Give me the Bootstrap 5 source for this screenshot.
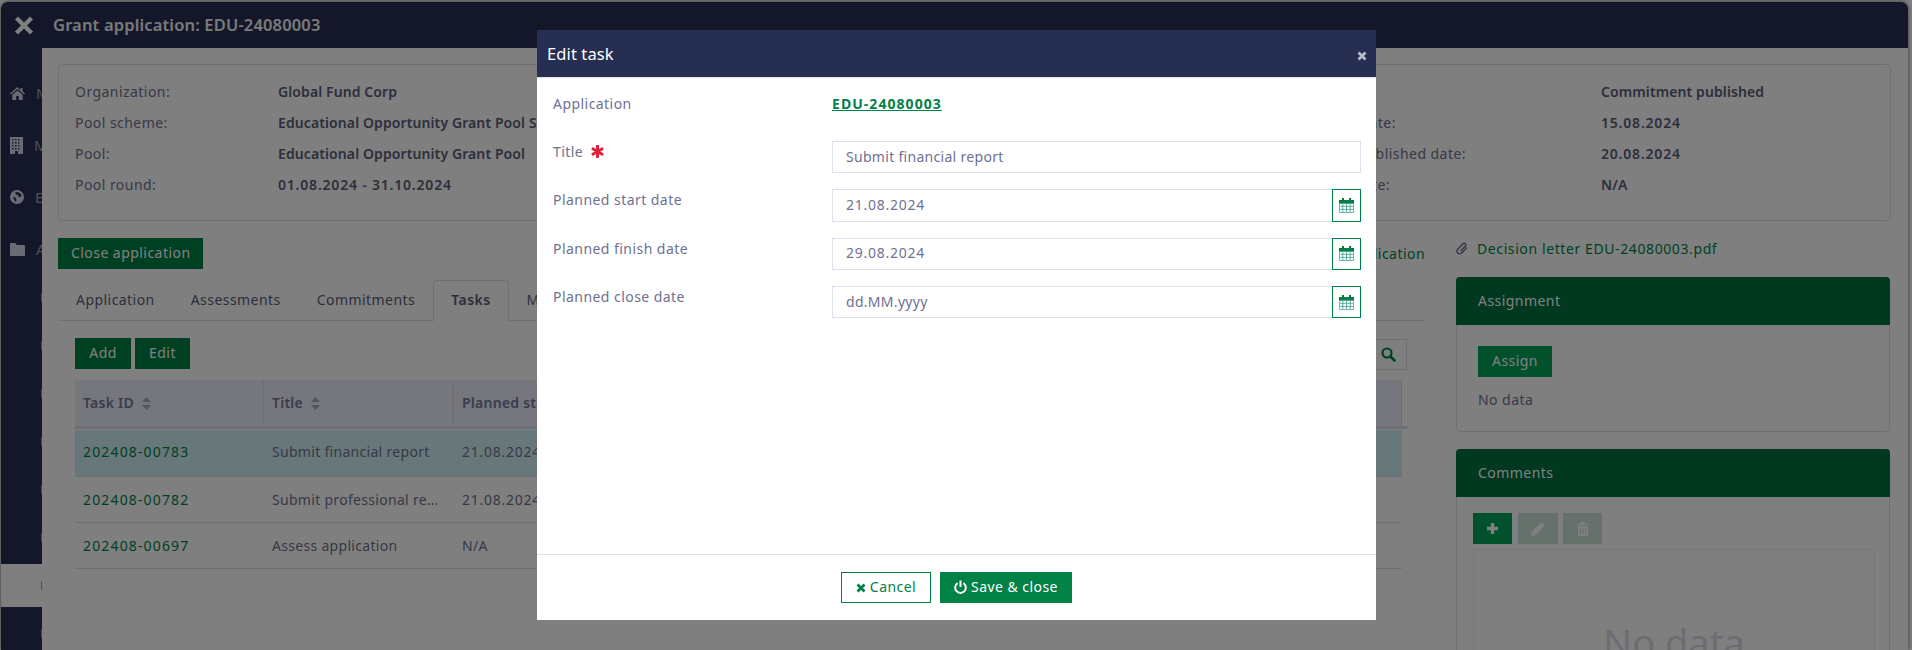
<!DOCTYPE html>
<html lang="en">
<head>
<meta charset="utf-8">
<title>Edit task</title>
<link href="https://cdn.jsdelivr.net/npm/bootstrap@5.3.0/dist/css/bootstrap.min.css" rel="stylesheet">
<style>
html,body{height:650px;overflow:hidden}
body{background:#fff;font-family:"Noto Sans","Open Sans",sans-serif;font-size:14px;letter-spacing:.45px;color:#6e7191}
.app-window{margin:2px 4px 0 1px;height:648px;background:#262e52;border-radius:7px 7px 0 0;overflow:hidden;box-shadow:0 0 4px rgba(0,0,0,.6)}
.app-top{height:46px;color:#fff}
.app-top svg{margin-left:13px;margin-right:19px}
.app-title{font-size:16.5px;font-weight:600;letter-spacing:.15px;color:#fff;opacity:.95}
.side{width:41px;flex:none;overflow:hidden;padding-top:19px;height:602px}
.side-main{height:52px;width:80px;padding-left:9px;color:#9a9db0}
.side-main svg{margin-right:11px;flex:none}
.side-main span{font-size:15px}
.side-sub{height:48px}
.side-sub i{display:block;width:1px;height:9px;margin-left:40px;background:#3ea0e0}
.side-sub.now{background:#fff;height:43px;margin:3px 0 2px}
.side-sub.now i{background:#f0902a}
.side-first{margin-top:-2px}
.main-pane{background:#fff;padding:16px 17px 0 16px;height:602px;overflow:hidden;min-width:0}
.info-box{display:grid;grid-template-columns:203px 984px 339px 1fr;padding:11px 16px 0;height:157px;border:1px solid #dfe0ee;border-radius:4px;grid-auto-rows:31px;align-items:center;white-space:nowrap}
.info-box b{font-weight:600;color:#5a5d78;letter-spacing:.1px}
.info-box b.nums{letter-spacing:.8px}
.nums{letter-spacing:.75px}
.cols{gap:31px;margin-top:17px}
.col-l{width:1367px;flex:none}
.col-r{width:434px;flex:none}
.green-btn{background:#008145;border:0;color:#fff;height:31px;border-radius:0;font-size:14px;padding:0 13px 2px;letter-spacing:.45px}
.green-btn:hover{background:#008145;color:#fff}
.lnk{color:#008145;text-decoration:none}
.tabs-row{margin-top:11px;height:41px;border-color:#dfe0ee;flex-wrap:nowrap}
.tabs-row .nav-link{height:41px;padding:0 17px;line-height:37px;color:#5a5d78;border-radius:4px 4px 0 0;white-space:nowrap;background:none;border:1px solid transparent}
.tabs-row .nav-link.active{border-color:#dfe0ee #dfe0ee #fff;font-weight:600;color:#5a5d78}
.tab-body{padding:17px 18px 0 17px}
.find-box{width:210px;height:31px;border:1px solid #dfe0ee;margin-top:1px;padding-right:10px}
.task-table{table-layout:fixed;width:1333px;margin:10px 0 0;color:#6e7191;border-collapse:separate;border-spacing:0;letter-spacing:.3px}
.task-table th{height:49px;background:#eceef8;font-weight:600;padding:0 8px 2px;border:0;border-bottom:3px solid #dfe0ee;border-right:1px solid #d8d9e8;vertical-align:middle;color:#74779a;white-space:nowrap;box-shadow:none;letter-spacing:.25px}
.task-table th.tail,.task-table td.tail{background:transparent;border-right:0;padding:0}
.task-table td.tail{border-bottom:0}
.task-table td{height:46px;padding:0 8px;border:0;border-bottom:1px solid #dfe0ee;vertical-align:middle;white-space:nowrap;overflow:hidden;text-overflow:ellipsis;background:transparent;box-shadow:none;color:#6e7191}
.task-table tr.sel td:not(.tail){background:#d0f0f4;height:48px;padding-bottom:3px}
.task-table tr.sel td{border-top:1px solid #fff}
.task-table .lnk{color:#008145;letter-spacing:1.15px}
.sort-i{margin-left:4px;vertical-align:-2px}
.doc-line{height:22px;margin-bottom:17px;letter-spacing:.6px;padding-bottom:2px}
.doc-line svg{margin-right:9px}
.side-card{border:1px solid #dfe0ee;border-radius:4px;margin-bottom:17px}
.side-head{height:48px;background:#00733f;color:#fff;padding-left:22px;margin:-1px -1px 0;line-height:47px;border-radius:4px 4px 0 0}
.side-body{padding:21px 21px 0;height:106px}
.btn-bright{background:#00a259;padding:0 14px 2px}
.btn-bright:hover{background:#00a259}
.tool-row{padding:16px 0 0 16px;gap:6px}
.tool-btn{width:39px;height:31px;padding:0;display:flex;align-items:center;justify-content:center}
.tool-btn.off{border-radius:0;width:40px}
.tool-btn.off.trash-btn{width:39px;margin-left:-1px}
.tool-btn.off:disabled{background:#cfe3d8;color:#fff;border:0;opacity:1}
.tool-row+.nada{margin:5px 14px 0 16px;height:200px;border:1px solid #f0f1f6;text-align:center;font-size:38px;color:#d9dbe6;padding-top:64px;letter-spacing:0}
.edit-dlg{max-width:839px;margin:30px 0 0 537px}
.edit-dlg .modal-content{height:590px;border:0;border-radius:0;background:#fff}
.edit-head{height:48px;background:#262e52;color:#fff;padding:0 9px 0 10px;border-bottom:1px solid #dfe0ee;border-radius:0}
.edit-head h5{font-size:16.5px;font-weight:400;letter-spacing:.1px}
.edit-x{background:none;border:0;padding:0;margin-top:5px;color:#b9bcc9;line-height:0}
.edit-form{padding:14.67px 15px 0 16px}
.edit-row{height:32.33px;margin-bottom:16px}
.edit-row label{width:279px;flex:none;line-height:21px;color:#6e7191}
.req{margin-left:8px;vertical-align:-1px;margin-top:-6px}
.edit-field{flex:1;min-width:0}
.edit-link{color:#008145;font-weight:700;line-height:21px;letter-spacing:1.05px}
.edit-input{height:32.33px;border-radius:0;border:1px solid #dfe0ee;padding:0 13px 2px;font-size:14px;color:#6e7191;letter-spacing:.3px}
.edit-input.dated{letter-spacing:.75px}
.edit-input::placeholder{color:#6e7191;opacity:1}
.cal-btn{width:29px;height:32.33px;padding:0;border:1px solid #008145;border-radius:0;background:#fff;margin-left:-1px;display:flex;align-items:center;justify-content:center;z-index:3}
.input-group>.edit-input{border-radius:0}
.edit-foot{height:66px;flex:none;border-top:1px solid #dfe0ee;border-radius:0;padding:17px 0 0;justify-content:center;align-items:flex-start;gap:9px;display:flex;margin-top:auto}
.edit-foot>*{margin:0}
.btn-ghost{background:#fff;border:1px solid #008145;color:#008145;height:31px;width:90px;border-radius:0;padding:0 0 2px;font-size:14px;letter-spacing:.45px}
.btn-ghost:hover{background:#fff;color:#008145;border-color:#008145}
.btn-save{width:132px;padding:0 0 2px}
</style>
</head>
<body>
<div class="app-window">
  <div class="app-top d-flex align-items-center">
    <svg width="20" height="19" viewBox="0 0 20 19"><path d="M2.5 2 17.5 17M17.5 2 2.5 17" stroke="#fff" stroke-width="4.4" fill="none"/></svg>
    <span class="app-title">Grant application: EDU-24080003</span>
  </div>
  <div class="d-flex">
    <div class="side">
      <div class="side-main d-flex align-items-center">
        <svg width="15" height="13" viewBox="0 0 15 13"><path fill="#d5d8ea" d="M7.5 0 0 6.4l.9 1L7.5 1.900l6.600 5.500.9-1-2.500-2.100V1h-2v2.600zM2.300 7.700V13h3.900V9h2.600v4h3.900V7.700L7.500 3.400z"/></svg>
        <span>My</span>
      </div>
      <div class="side-main d-flex align-items-center">
        <svg width="13" height="17" viewBox="0 0 13 17"><path fill="#d5d8ea" fill-rule="evenodd" d="M0 0h13v17H0zM2 2v1.500h1.500V2zm3 0v1.500h1.500V2zm3 0v1.500h1.500V2zM2 5v1.500h1.500V5zm3 0v1.500h1.500V5zm3 0v1.500h1.500V5zM2 8v1.500h1.500V8zm3 0v1.500h1.500V8zm3 0v1.500h1.500V8zM2 11v1.500h1.500V11zm3 0v1.500h1.500V11zm3 0v1.500h1.500V11zM5 14v3h3v-3z"/></svg>
        <span>My</span>
      </div>
      <div class="side-main d-flex align-items-center">
        <svg width="14" height="14" viewBox="0 0 14 14"><path fill="#d5d8ea" fill-rule="evenodd" d="M7 0a7 7 0 1 0 0 14A7 7 0 0 0 7 0zM5 2.500 7.500 2l2 1 2 1.500-.5 2-2 1-1-2.500-2-.5zM3 7l2.500.5 1 2-.5 2.500-1.500-1.500z"/></svg>
        <span>E</span>
      </div>
      <div class="side-main d-flex align-items-center">
        <svg width="15" height="13" viewBox="0 0 15 13"><path fill="#d5d8ea" d="M1 0h4.500l1.200 2H14a1 1 0 0 1 1 1v9a1 1 0 0 1-1 1H1a1 1 0 0 1-1-1V1a1 1 0 0 1 1-1z"/></svg>
        <span>A</span>
      </div>
      <div class="side-sub side-first d-flex align-items-center"><i></i></div>
      <div class="side-sub d-flex align-items-center"><i></i></div>
      <div class="side-sub d-flex align-items-center"><i></i></div>
      <div class="side-sub d-flex align-items-center"><i></i></div>
      <div class="side-sub d-flex align-items-center"><i></i></div>
      <div class="side-sub d-flex align-items-center"><i></i></div>
      <div class="side-sub now d-flex align-items-center"><i></i></div>
      <div class="side-sub d-flex align-items-center"><i></i></div>
    </div>
    <div class="main-pane flex-grow-1">
      <div class="info-box">
        <span>Organization:</span><b>Global Fund Corp</b><span>Status:</span><b>Commitment published</b>
        <span>Pool scheme:</span><b>Educational Opportunity Grant Pool Scheme</b><span>Assessed end date:</span><b class="nums">15.08.2024</b>
        <span>Pool:</span><b>Educational Opportunity Grant Pool</b><span>Commitment published date:</span><b class="nums">20.08.2024</b>
        <span>Pool round:</span><b class="nums">01.08.2024 - 31.10.2024</b><span>Formal close date:</span><b>N/A</b>
      </div>
      <div class="cols d-flex">
        <div class="col-l">
          <div class="d-flex justify-content-between align-items-center">
            <button class="btn green-btn" type="button">Close application</button>
            <a class="lnk" href="#">Print application</a>
          </div>
          <ul class="nav nav-tabs tabs-row">
            <li class="nav-item"><a class="nav-link" href="#">Application</a></li>
            <li class="nav-item"><a class="nav-link" href="#">Assessments</a></li>
            <li class="nav-item"><a class="nav-link" href="#">Commitments</a></li>
            <li class="nav-item"><a class="nav-link active" href="#">Tasks</a></li>
            <li class="nav-item"><a class="nav-link" href="#">Messages</a></li>
          </ul>
          <div class="tab-body">
            <div class="d-flex justify-content-between align-items-start">
              <div class="d-flex gap-1">
                <button class="btn green-btn" type="button" style="width:56px">Add</button>
                <button class="btn green-btn" type="button" style="width:55px">Edit</button>
              </div>
              <div class="find-box d-flex align-items-center justify-content-end">
                <svg width="15" height="15" viewBox="0 0 15 15"><circle cx="6" cy="6" r="4.500" stroke="#008145" stroke-width="2.200" fill="none"/><path d="m9.500 9.500 4 4" stroke="#008145" stroke-width="2.600" stroke-linecap="round"/></svg>
              </div>
            </div>
            <table class="table task-table">
              <colgroup><col style="width:189px"><col style="width:190px"><col><col style="width:200px"><col style="width:200px"><col style="width:6px"></colgroup>
              <thead>
                <tr>
                  <th>Task ID <svg class="sort-i" width="9" height="13" viewBox="0 0 9 13"><path fill="#a6a8be" d="M4.500 0 9 5H0zM4.500 13 0 8h9z"/></svg></th>
                  <th>Title <svg class="sort-i" width="9" height="13" viewBox="0 0 9 13"><path fill="#a6a8be" d="M4.500 0 9 5H0zM4.500 13 0 8h9z"/></svg></th>
                  <th>Planned start date</th><th>Planned finish date</th><th>Planned close date</th><th class="tail"></th>
                </tr>
              </thead>
              <tbody>
                <tr class="sel"><td><a class="lnk" href="#">202408-00783</a></td><td>Submit financial report</td><td class="nums">21.08.2024</td><td class="nums">29.08.2024</td><td>N/A</td><td class="tail"></td></tr>
                <tr><td><a class="lnk" href="#">202408-00782</a></td><td>Submit professional report</td><td class="nums">21.08.2024</td><td class="nums">29.08.2024</td><td>N/A</td><td class="tail"></td></tr>
                <tr><td><a class="lnk" href="#">202408-00697</a></td><td>Assess application</td><td>N/A</td><td>N/A</td><td>N/A</td><td class="tail"></td></tr>
              </tbody>
            </table>
          </div>
        </div>
        <div class="col-r">
          <div class="doc-line d-flex align-items-center">
            <svg width="12" height="14" viewBox="0 0 12 14"><path d="M10.800 6.500 5.500 12a2.600 2.600 0 0 1-3.800-3.700l5.500-5.800a1.700 1.700 0 0 1 2.400 2.300L4.600 10" stroke="#6e7191" stroke-width="1.500" fill="none"/></svg>
            <a class="lnk" href="#">Decision letter EDU-24080003.pdf</a>
          </div>
          <div class="side-card">
            <div class="side-head">Assignment</div>
            <div class="side-body">
              <button class="btn green-btn btn-bright" type="button">Assign</button>
              <div class="mt-2 pt-1">No data</div>
            </div>
          </div>
          <div class="side-card">
            <div class="side-head">Comments</div>
            <div class="tool-row d-flex">
              <button class="btn green-btn btn-bright tool-btn" type="button" aria-label="Add"><svg width="13" height="13" viewBox="0 0 13 13"><path d="M6.500 1v11M1 6.500h11" stroke="#fff" stroke-width="3.400"/></svg></button>
              <button class="btn tool-btn off" type="button" disabled aria-label="Edit"><svg width="14" height="14" viewBox="0 0 14 14"><path fill="#fff" d="M10.500 0 14 3.500 4.500 13 0 14l1-4.500z"/></svg></button>
              <button class="btn tool-btn off trash-btn" type="button" disabled aria-label="Delete"><svg width="12" height="14" viewBox="0 0 12 14"><path fill="#fff" fill-rule="evenodd" d="M4 0h4l1 2h3v1H0V2h3zM1 4h10v9a1 1 0 0 1-1 1H2a1 1 0 0 1-1-1zm2 1.500V12h1V5.500zm2.500 0V12h1V5.500zm2.500 0V12h1V5.500z"/></svg></button>
            </div>
            <div class="nada">No data</div>
          </div>
        </div>
      </div>
    </div>
  </div>
</div>

<div class="modal-backdrop show"></div>
<div class="modal d-block" tabindex="-1">
  <div class="modal-dialog edit-dlg">
    <div class="modal-content">
      <div class="edit-head d-flex align-items-center justify-content-between">
        <h5 class="m-0">Edit task</h5>
        <button class="edit-x" type="button" aria-label="Close"><svg width="10" height="10" viewBox="0 0 10 10"><path d="M1.500 1.500l7 7M8.500 1.500l-7 7" stroke="currentColor" stroke-width="2.800"/></svg></button>
      </div>
      <div class="edit-form">
        <div class="edit-row d-flex">
          <label>Application</label>
          <div class="edit-field"><a class="edit-link" href="#">EDU-24080003</a></div>
        </div>
        <div class="edit-row d-flex">
          <label>Title<svg class="req" width="13" height="13" viewBox="0 0 13 13"><path d="M6.500 0v13M.9 3.200l11.200 6.600M12.100 3.200.9 9.800" stroke="#e0233c" stroke-width="3"/></svg></label>
          <div class="edit-field"><input class="form-control edit-input" type="text" value="Submit financial report"></div>
        </div>
        <div class="edit-row d-flex">
          <label>Planned start date</label>
          <div class="edit-field input-group flex-nowrap"><input class="form-control edit-input dated" type="text" value="21.08.2024"><button class="cal-btn" type="button" aria-label="Pick date"><svg width="15" height="15" viewBox="0 0 15 15"><path fill="#007d43" d="M3 0h2v3H3zM10 0h2v3h-2z"/><path fill="#007d43" d="M0 2h15v3.500H0z"/><path fill="none" stroke="#3a9d8c" stroke-width=".8" d="M.4 5.400h14.200v9.200H.4zM3.800 6v8.500M7.500 6v8.500M11.200 6v8.500M1 8.300h13M1 11.400h13"/></svg></button></div>
        </div>
        <div class="edit-row d-flex">
          <label>Planned finish date</label>
          <div class="edit-field input-group flex-nowrap"><input class="form-control edit-input dated" type="text" value="29.08.2024"><button class="cal-btn" type="button" aria-label="Pick date"><svg width="15" height="15" viewBox="0 0 15 15"><path fill="#007d43" d="M3 0h2v3H3zM10 0h2v3h-2z"/><path fill="#007d43" d="M0 2h15v3.500H0z"/><path fill="none" stroke="#3a9d8c" stroke-width=".8" d="M.4 5.400h14.200v9.200H.4zM3.800 6v8.500M7.500 6v8.500M11.200 6v8.500M1 8.300h13M1 11.400h13"/></svg></button></div>
        </div>
        <div class="edit-row d-flex">
          <label>Planned close date</label>
          <div class="edit-field input-group flex-nowrap"><input class="form-control edit-input" type="text" placeholder="dd.MM.yyyy"><button class="cal-btn" type="button" aria-label="Pick date"><svg width="15" height="15" viewBox="0 0 15 15"><path fill="#007d43" d="M3 0h2v3H3zM10 0h2v3h-2z"/><path fill="#007d43" d="M0 2h15v3.500H0z"/><path fill="none" stroke="#3a9d8c" stroke-width=".8" d="M.4 5.400h14.200v9.200H.4zM3.800 6v8.500M7.500 6v8.500M11.200 6v8.500M1 8.300h13M1 11.400h13"/></svg></button></div>
        </div>
      </div>
      <div class="edit-foot">
        <button class="btn btn-ghost" type="button"><svg width="10" height="10" viewBox="0 0 10 10" class="me-1"><path d="M1.500 1.500l7 7M8.500 1.500l-7 7" stroke="currentColor" stroke-width="2.800"/></svg>Cancel</button>
        <button class="btn green-btn btn-save" type="button"><svg width="13" height="14" viewBox="0 0 13 14" class="me-1" style="vertical-align:-2px"><path d="M3.600 3.200a5.300 5.300 0 1 0 5.800 0M6.500 .5v6.500" stroke="#fff" stroke-width="2" fill="none"/></svg>Save &amp; close</button>
      </div>
    </div>
  </div>
</div>
<script src="https://cdn.jsdelivr.net/npm/bootstrap@5.3.0/dist/js/bootstrap.bundle.min.js"></script>
</body>
</html>
